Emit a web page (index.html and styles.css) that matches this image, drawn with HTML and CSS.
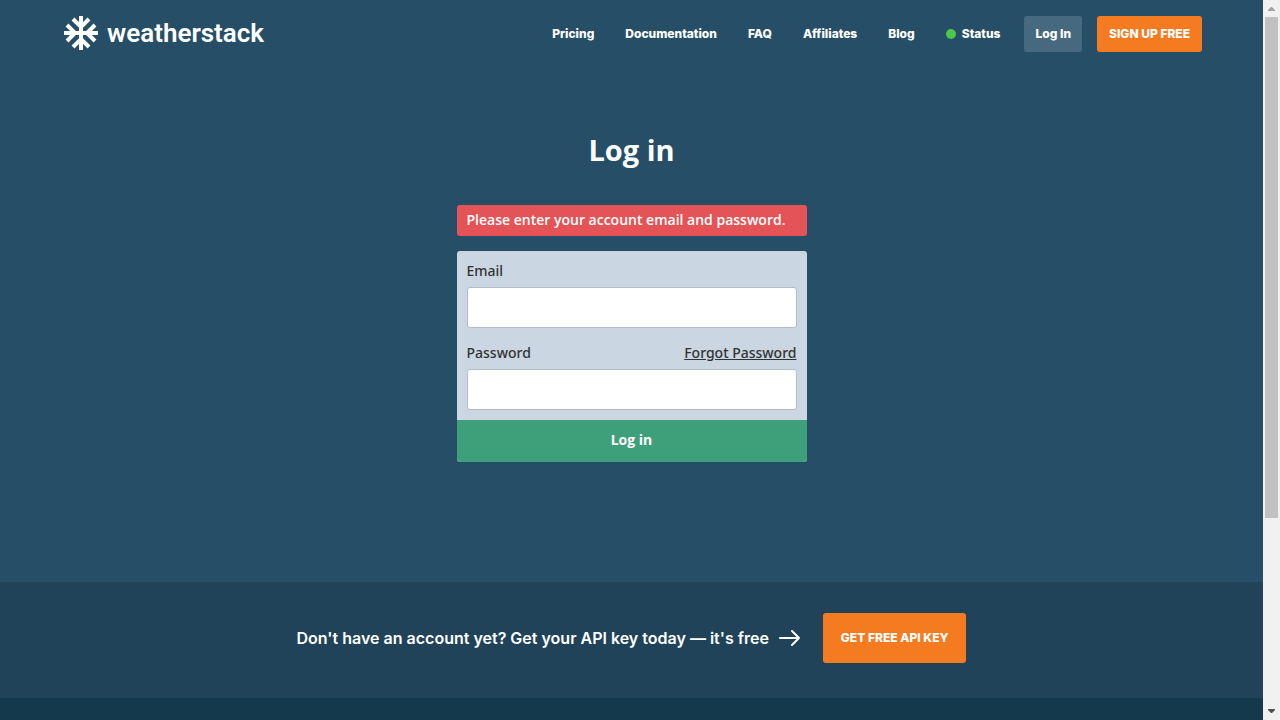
FILE: index.html
```html
<!DOCTYPE html>
<html lang="en">
<head>
<meta charset="utf-8">
<meta name="viewport" content="width=device-width, initial-scale=1">
<title>Log in - weatherstack</title>
<link rel="stylesheet" href="styles.css">
</head>
<body>
<div class="viewport">
  <div class="page">
    <header class="header">
      <a class="logo" href="#">
        <svg class="logo-mark" viewBox="0 0 34 34" aria-hidden="true">
          <path d="M17 0V34M0 17H34"/>
          <path d="M9 3L17 11L25 3M9 31L17 23L25 31M3 9L11 17L3 25M31 9L23 17L31 25"/>
        </svg>
        <span class="logo-text">weatherstack</span>
      </a>
      <nav class="nav">
        <a href="#">Pricing</a>
        <a href="#">Documentation</a>
        <a href="#">FAQ</a>
        <a href="#">Affiliates</a>
        <a href="#">Blog</a>
        <a class="status" href="#"><span class="status-dot"></span>Status</a>
      </nav>
      <div class="actions">
        <a class="button button-muted" href="#">Log In</a>
        <a class="button button-orange" href="#">SIGN UP FREE</a>
      </div>
    </header>
    <main class="main">
      <h1 class="title">Log in</h1>
      <p class="alert" role="alert">Please enter your account email and password.</p>
      <form class="form">
        <div class="fields">
          <div class="field">
            <div class="field-head"><label for="email">Email</label></div>
            <input class="input" id="email" type="email">
          </div>
          <div class="field">
            <div class="field-head"><label for="password">Password</label><a href="#">Forgot Password</a></div>
            <input class="input" id="password" type="password">
          </div>
        </div>
        <button class="submit" type="submit">Log in</button>
      </form>
    </main>
    <section class="cta">
      <p class="cta-text">Don't have an account yet? Get your API key today — it's free</p>
      <svg class="cta-arrow" viewBox="0 0 22 16" aria-hidden="true"><path d="M1 8H20M13 1L20 8L13 15"/></svg>
      <a class="button button-orange button-large" href="#">GET FREE API KEY</a>
    </section>
    <footer class="footer"></footer>
  </div>
  <div class="scrollbar" aria-hidden="true">
    <svg class="scroll-up" viewBox="0 0 17 17"><path d="M5 11V10L8 7H9L12 10V11Z"/></svg>
    <div class="scroll-track"><div class="scroll-thumb"></div></div>
    <svg class="scroll-down" viewBox="0 0 17 17"><path d="M5 6V7L8 10H9L12 7V6Z"/></svg>
  </div>
</div>
</body>
</html>
```
FILE: styles.css
```css
* { box-sizing: border-box; }
body { margin: 0; background: #14384c; color: #fff; font-family: "Open Sans", "Noto Sans", sans-serif; font-size: 14px; }
a { color: inherit; text-decoration: none; }
h1, p { margin: 0; }
.viewport { display: flex; height: 100vh; }
.page { display: flex; flex: 1; flex-direction: column; min-width: 0; overflow: hidden; }

.header { display: flex; align-items: center; padding: 16px 61px 16px 64px; background: #264f67; font: 800 12px/20px "Inter", sans-serif; }
.logo { display: flex; align-items: center; gap: 9px; margin-right: auto; padding-bottom: 2px; }
.logo-mark { width: 34px; height: 34px; fill: none; stroke: #fff; stroke-width: 4; }
.logo-text { font: 600 26px/34px "Roboto", sans-serif; }
.nav { display: flex; gap: 31px; margin-right: 24px; }
.status { display: flex; align-items: center; gap: 6px; }
.status-dot { width: 10px; height: 10px; border-radius: 50%; background: #4bc84b; }
.actions { display: flex; gap: 15px; }
.button { padding: 8px 11px; border-radius: 3px; white-space: nowrap; }
.button-muted { background: #46697f; }
.button-orange { padding: 8px 12px; background: #f57b20; }
.button-large { padding: 15px 18px; }

.main { display: flex; flex-direction: column; align-items: center; padding: 62px 20px 120px; background: #264f67; }
.title { font-size: 29px; line-height: 40px; margin-bottom: 35px; }
.alert { width: 100%; max-width: 350px; padding: 5px 10px 6px; margin-bottom: 15px; border-radius: 3px; background: #e45356; font-weight: 600; line-height: 20px; }
.form { width: 100%; max-width: 350px; border-radius: 3px; overflow: hidden; background: #cad6e2; color: #333; }
.fields { display: flex; flex-direction: column; gap: 15px; padding: 10px; }
.field-head { display: flex; justify-content: space-between; margin-bottom: 6px; font: 500 14px/20px "Noto Sans", sans-serif; }
.field-head a { text-decoration: underline; }
.input { display: block; width: 100%; height: 41px; padding: 10px; border: 1px solid #b0bdca; border-radius: 3px; background: #fff; font: inherit; }
.submit { display: block; width: 100%; padding: 10px 11px 12px; border: 0; background: #3ea07a; color: #fff; font: 700 14px/20px "Open Sans", sans-serif; }

.cta { display: flex; align-items: center; justify-content: center; padding: 31px 20px 35px; background: #204359; font: 600 16px/24px "Inter", sans-serif; }
.cta-text { margin-right: 10px; }
.cta-arrow { width: 22px; height: 16px; margin-right: 22px; fill: none; stroke: #fff; stroke-width: 2; stroke-linecap: round; stroke-linejoin: round; }
.cta .button { font-size: 12px; font-weight: 800; line-height: 20px; }
.footer { flex: 1; background: #14384c; }

.scrollbar { display: flex; flex-direction: column; width: 17px; background: #f1f1f1; }
.scroll-up, .scroll-down { display: block; width: 17px; height: 17px; }
.scroll-up { fill: #a3a3a3; }
.scroll-down { fill: #505050; }
.scroll-track { flex: 1; padding: 0 2px; }
.scroll-thumb { height: 73%; background: #c1c1c1; }
```
